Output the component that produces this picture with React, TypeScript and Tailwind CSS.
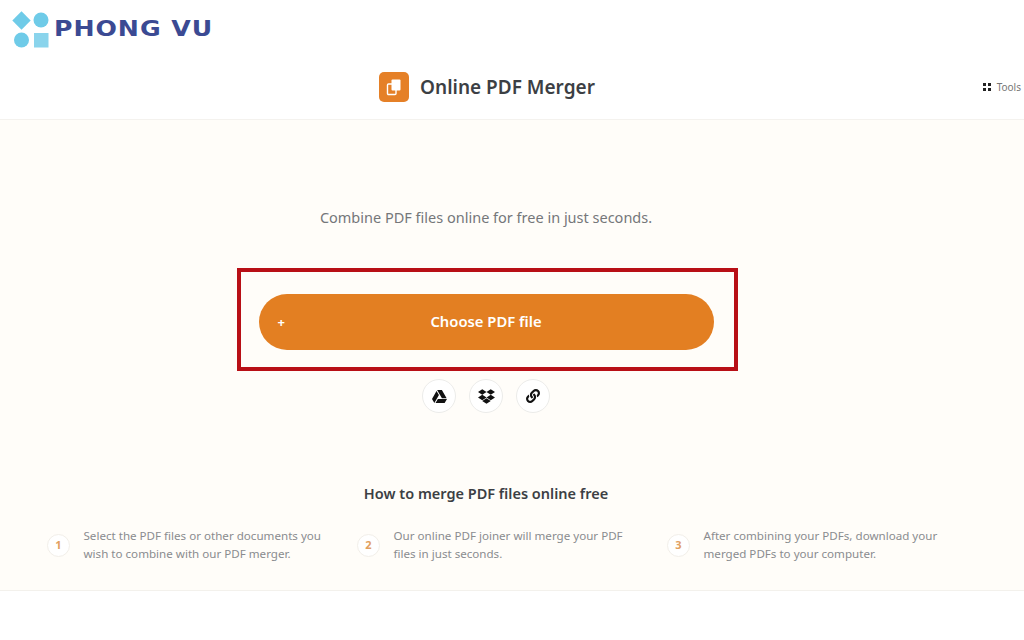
import React from "react";
import { FaDropbox, FaGoogleDrive, FaLink } from "react-icons/fa";

const STEPS = [
  { n: 1, lines: ["Select the PDF files or other documents you", "wish to combine with our PDF merger."] },
  { n: 2, lines: ["Our online PDF joiner will merge your PDF", "files in just seconds."] },
  { n: 3, lines: ["After combining your PDFs, download your", "merged PDFs to your computer."] },
];

const sans = "font-['Noto_Sans','Liberation_Sans',sans-serif]";

function Logo() {
  return (
    <div className="flex items-start h-[60px] pl-3 pt-[11px] gap-[7px]">
      <svg width="37" height="37" viewBox="0 0 37 37" className="shrink-0">
        <rect x="3" y="3" width="13" height="13" transform="rotate(45 9.5 9.5)" fill="#6fcbe8" />
        <circle cx="29" cy="9" r="7.5" fill="#6fcbe8" />
        <circle cx="9.5" cy="29" r="7.5" fill="#6fcbe8" />
        <rect x="22" y="22" width="14.5" height="14.5" fill="#8ad4ec" />
      </svg>
      <span className="font-['DejaVu_Sans',sans-serif] font-bold text-[21px] leading-[34px] mt-[1px] tracking-[0.8px] text-[#3b4a93] whitespace-nowrap origin-left scale-x-[1.2] -ml-[2px]">PHONG VU</span>
    </div>
  );
}

function RoundButton({ children }: { children: React.ReactNode }) {
  return (
    <div className="w-[34px] h-[34px] rounded-full bg-white border border-[#ececea] flex items-center justify-center text-[#111]">
      {children}
    </div>
  );
}

export default function App() {
  return (
    <div className={`${sans} w-[1024px] h-[640px] bg-white overflow-hidden`}>
      <header className="h-[120px] border-b border-[#f4f2ee] flex flex-col">
        <Logo />
        <div className="relative flex-1 flex items-start justify-center">
          <div className="flex items-center gap-[11px] mt-[11px] mr-[50px]">
            <div className="w-[30px] h-[30px] rounded-[5px] bg-[#e58027] flex items-center justify-center">
              <svg width="16" height="18" viewBox="0 0 16 18">
                <rect x="1.5" y="6" width="8.5" height="10.5" rx="1" fill="none" stroke="#fff" strokeWidth="1.4" />
                <rect x="5.5" y="1.5" width="9" height="11" rx="1" fill="#fff" />
              </svg>
            </div>
            <h1 className="text-[19px] leading-[30px] mt-[1px] font-semibold text-[#3c3f44]">Online PDF Merger</h1>
          </div>
          <div className="absolute right-[3px] top-[20px] flex items-center gap-[6px]">
            <div className="grid grid-cols-2 gap-[2px]">
              <span className="w-[3px] h-[3px] bg-[#222]" />
              <span className="w-[3px] h-[3px] bg-[#222]" />
              <span className="w-[3px] h-[3px] bg-[#222]" />
              <span className="w-[3px] h-[3px] bg-[#222]" />
            </div>
            <span className="text-[10px] leading-[14px] text-[#777]">Tools</span>
          </div>
        </div>
      </header>

      <main className="h-[471px] bg-[#fffdf9] border-b border-[#f3f1ec] flex flex-col items-center">
        <p className="mt-[86px] mr-[52px] text-[14.5px] leading-[22px] text-[#75777a]">
          Combine PDF files online for free in just seconds.
        </p>

        <div className="mt-[40px] mr-[50px] w-[501px] h-[103px] pt-[4px] pr-[2px] border-4 border-[#b80f16] flex items-center justify-center">
          <button className="relative w-[455px] h-[56px] rounded-full bg-[#e37f22] text-white text-[14.8px] font-semibold">
            <span className="absolute left-[19px] top-[18px] text-[13px] leading-[20px] font-bold">+</span>
            Choose PDF file
          </button>
        </div>

        <div className="mt-[8px] mr-[52px] flex gap-[13px]">
          <RoundButton><FaGoogleDrive size={15} /></RoundButton>
          <RoundButton><FaDropbox size={17} /></RoundButton>
          <RoundButton><FaLink size={14} /></RoundButton>
        </div>

        <h2 className="mt-[70px] mr-[52px] text-[14.5px] leading-[20px] font-semibold text-[#3c3f44]">
          How to merge PDF files online free
        </h2>

        <div className="mt-[24px] self-start pl-[47px] flex">
          {STEPS.map(s => (
            <div key={s.n} className="w-[310px] flex items-center">
              <div className="w-[23px] h-[23px] shrink-0 rounded-full bg-white border border-[#f2efe9] flex items-center justify-center text-[11px] font-bold text-[#e2a05f]">
                {s.n}
              </div>
              <div className="ml-[13.5px] text-[11.6px] leading-[18px] text-[#8a8c8f] whitespace-nowrap">
                {s.lines.map(l => <div key={l}>{l}</div>)}
              </div>
            </div>
          ))}
        </div>
      </main>
    </div>
  );
}
